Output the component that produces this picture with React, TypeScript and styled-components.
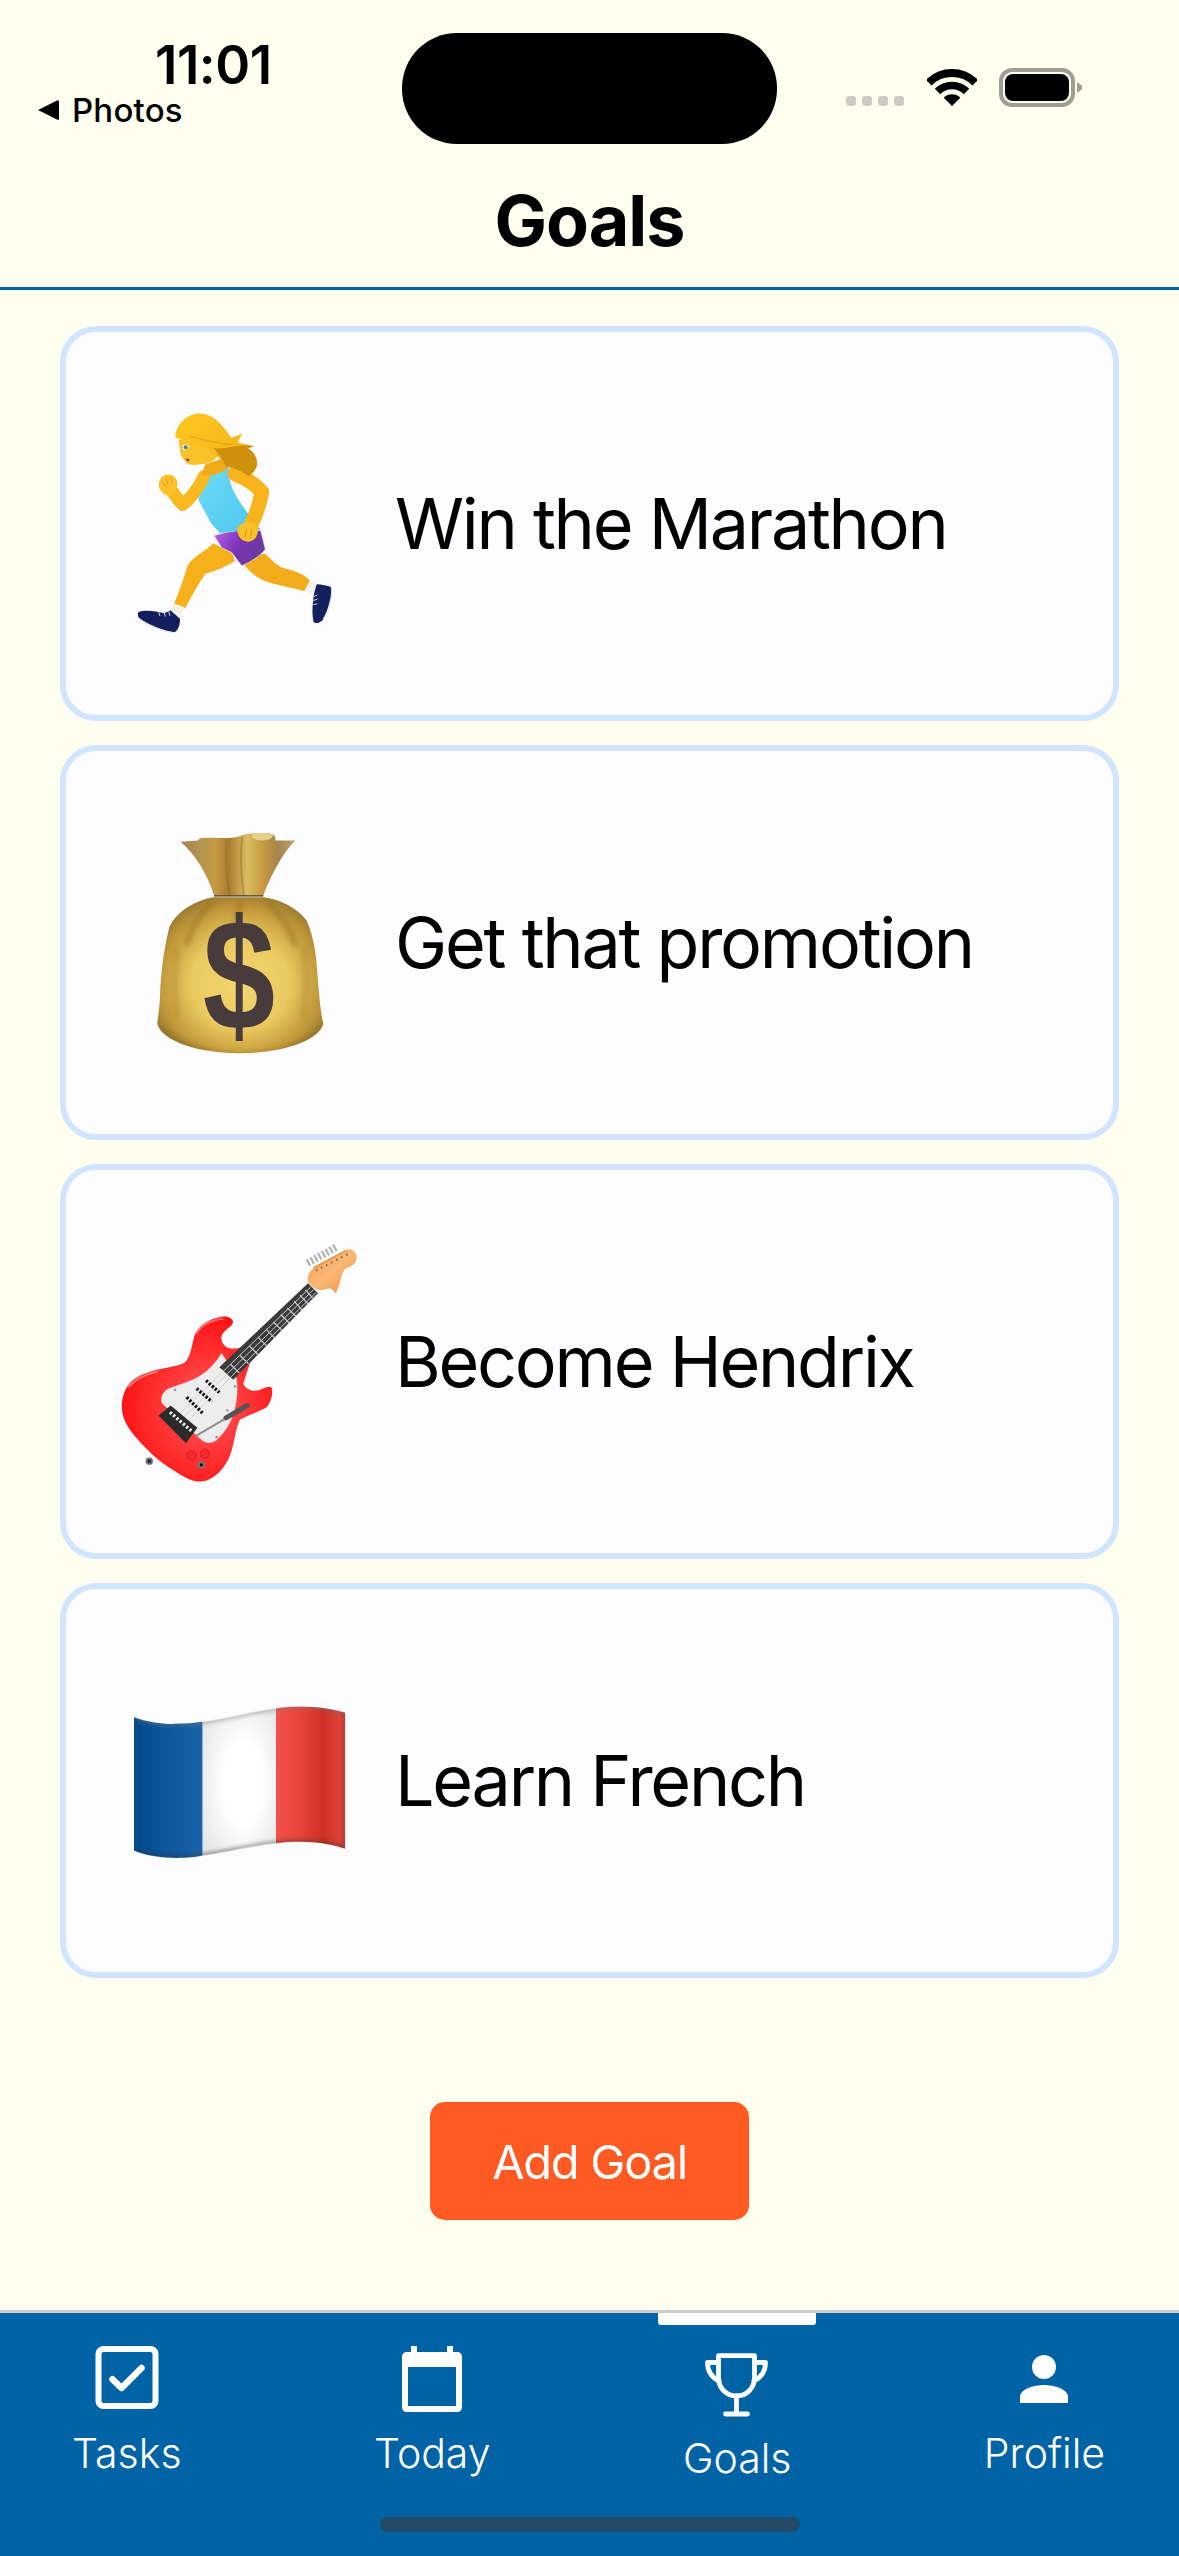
import React from "react";
import styled, { createGlobalStyle } from "styled-components";

const Global = createGlobalStyle`
  html, body { margin: 0; padding: 0; background: #fffff0; }
  * { box-sizing: border-box; }
  body { font-family: Inter, "Liberation Sans", sans-serif; }
`;

const Page = styled.div`
  width: 1179px;
  height: 2556px;
  display: flex;
  flex-direction: column;
  background: #fffff0;
  overflow: hidden;
  color: #000;
`;

const Header = styled.header`
  border-bottom: 3px solid #0063a6;
  height: 290px;
  display: flex;
  flex-direction: column;
`;

const StatusBar = styled.div`
  display: flex;
  height: 144px;
  padding-top: 33px;
`;

const StatusLeft = styled.div`
  width: 402px;
  padding: 7px 0 0 38px;
  display: flex;
  flex-direction: column;
`;

const Clock = styled.div`
  margin-left: 117px;
  font-size: 53px;
  line-height: 50px;
  font-weight: 600;
  letter-spacing: -0.5px;
`;

const BackLink = styled.div`
  margin-top: 3px;
  display: flex;
  align-items: center;
  gap: 13px;
  font-size: 33px;
  line-height: 34px;
  font-weight: 500;
  letter-spacing: 0.2px;
`;

const BackArrow = styled.span`
  width: 21px;
  height: 21px;
  background: #000;
  border-radius: 2px;
  clip-path: polygon(100% 0, 100% 100%, 0 50%);
`;

const Island = styled.div`
  width: 375px;
  height: 111px;
  border-radius: 55px;
  background: #000;
`;

const StatusRight = styled.div`
  margin: 35px 0 0 69px;
  height: 39px;
  display: flex;
  align-items: flex-end;
  gap: 23px;
`;

const Signal = styled.div`
  display: flex;
  gap: 6px;
  margin-bottom: 1px;
`;

const SignalDot = styled.span`
  width: 10px;
  height: 10px;
  border-radius: 3.5px;
  background: #ccccc4;
`;

const WifiIcon = styled.svg`
  display: block;
  width: 50px;
  height: 37px;
  margin-bottom: 1px;
`;

const Battery = styled.div`
  width: 76px;
  height: 39px;
  margin-left: -1px;
  padding: 2px;
  border: 4px solid #9e9e93;
  border-radius: 13px;
  position: relative;
  &::after {
    content: "";
    position: absolute;
    left: 74px;
    top: 10px;
    width: 5px;
    height: 11px;
    background: #9e9e93;
    clip-path: polygon(0 0, 100% 35%, 100% 65%, 0 100%);
  }
`;

const BatteryFill = styled.div`
  height: 100%;
  border-radius: 8px;
  background: #000;
`;

const TitleBar = styled.div`
  flex: 1;
  padding-top: 10px;
  display: flex;
  align-items: center;
  justify-content: center;
`;

const Title = styled.h1`
  margin: 0;
  font-size: 70px;
  line-height: 80px;
  font-weight: 700;
  letter-spacing: -1px;
`;

const Main = styled.main`
  flex: 1;
  padding: 36px 60px 0;
  display: flex;
  flex-direction: column;
`;

const GoalList = styled.div`
  display: flex;
  flex-direction: column;
  gap: 24px;
`;

const GoalCard = styled.div`
  height: 395px;
  border: 6px solid #d2e5ff;
  border-radius: 36px;
  background: #fdfdff;
  padding-left: 50px;
  display: flex;
  align-items: center;
  gap: 29px;
`;

const EmojiArt = styled.svg`
  display: block;
  flex: none;
  width: 250px;
  height: 250px;
`;

const GoalName = styled.div`
  font-size: 70px;
  line-height: 88px;
  font-weight: 400;
  letter-spacing: -2.25px;
`;

const AddButton = styled.button`
  align-self: center;
  margin-top: 124px;
  width: 319px;
  height: 118px;
  border: 0;
  border-radius: 15px;
  background: #ff5a22;
  color: #fff;
  font-family: inherit;
  font-size: 47px;
  font-weight: 400;
  letter-spacing: -1.25px;
`;

const TabBar = styled.nav`
  position: relative;
  height: 246px;
  border-top: 3px solid #cccccc;
  background: #0063a6;
  padding: 29px 74px 0 72px;
  display: flex;
  align-items: flex-start;
  justify-content: space-between;
`;

const TabItem = styled.div<{ $active?: boolean }>`
  display: flex;
  flex-direction: column;
  align-items: center;
  padding-top: ${(p) => (p.$active ? "7px" : "0")};
  color: #fff;
`;

const TabIcon = styled.svg`
  display: block;
  width: 72px;
  height: 72px;
`;

const TabLabel = styled.span<{ $active?: boolean }>`
  margin-top: ${(p) => (p.$active ? "12px" : "14px")};
  font-size: 41px;
  line-height: 50px;
  font-weight: 300;
`;

const ActiveMark = styled.span`
  position: absolute;
  left: 658px;
  top: 0;
  width: 158px;
  height: 12px;
  background: #fff;
  border-radius: 0 0 3px 3px;
`;

const HomeBar = styled.span`
  position: absolute;
  left: 380px;
  top: 204px;
  width: 420px;
  height: 15px;
  border-radius: 8px;
  background: #234a66;
`;

const RunnerEmoji = () => (
  <EmojiArt viewBox="228 265.5 750 750" aria-hidden="true">
    <defs>
      <linearGradient id="shorts" x1="0" y1="0" x2="1" y2="0.4">
        <stop offset="0" stopColor="#b663ee" />
        <stop offset="0.55" stopColor="#7a34b4" />
        <stop offset="1" stopColor="#6a3a9a" />
      </linearGradient>
      <linearGradient id="top" x1="0" y1="0" x2="1" y2="1">
        <stop offset="0" stopColor="#6cdbfb" />
        <stop offset="1" stopColor="#4cc6ea" />
      </linearGradient>
      <linearGradient id="hair" x1="0" y1="0" x2="1" y2="1">
        <stop offset="0" stopColor="#fdc823" />
        <stop offset="0.65" stopColor="#f6b81a" />
        <stop offset="1" stopColor="#d89a10" />
      </linearGradient>
    </defs>
    <path d="M612 762C635 745 655 730 675 730C695 745 708 768 738 775C768 782 792 793 810 810L793 842C760 832 725 826 695 818C660 808 635 792 612 762Z" fill="#f3ac1a" />
    <path d="M810 810L832 824L818 852L793 842Z" fill="#f5f2ea" />
    <path d="M830 821C845 822 862 824 874 830C880 850 865 905 850 926C840 938 825 942 820 932C815 905 818 880 822 850Z" fill="#14205e" />
    <path d="M874 830C880 850 865 905 850 926" fill="none" stroke="#e6e6ee" strokeWidth="4" />
    <path d="M822 858L832 853M820 870L832 866M820 882L832 880" stroke="#cfd3e6" strokeWidth="3" />
    <path d="M520 698C500 720 468 732 444 762C432 800 418 845 402 880L436 894C452 860 478 818 496 790C525 782 558 768 585 752L575 722L548 712Z" fill="#f6b01c" />
    <path d="M400 878L434 890L420 918L388 905Z" fill="#f5f2ea" />
    <path d="M295 905C310 898 345 900 372 908L392 900L420 925C420 945 415 958 405 965C375 965 325 945 300 925C293 918 292 910 295 905Z" fill="#14205e" />
    <path d="M298 926C325 945 375 965 405 967" fill="none" stroke="#e6e6ee" strokeWidth="4" />
    <path d="M355 902L360 917M372 904L376 918M386 903L390 916" stroke="#cfd3e6" strokeWidth="3" />
    <path d="M522 675C545 668 575 662 600 660L662 660L676 716C660 738 630 755 605 766L575 726L545 712Z" fill="url(#shorts)" stroke="#f4e9fb" strokeWidth="2" />
    <path d="M490 484C505 498 530 495 545 480L568 468C562 490 570 520 585 550C600 580 625 610 662 658C620 660 575 662 540 668L514 640L476 570C474 540 482 510 490 484Z" fill="url(#top)" />
    <path d="M492 498C480 525 452 565 428 582C415 570 405 555 395 540" fill="none" stroke="#f8b81f" strokeWidth="38" strokeLinecap="round" strokeLinejoin="round" />
    <path d="M358 512C363 496 380 488 396 494C410 501 416 515 410 532C402 552 388 560 376 553C362 544 352 528 358 512Z" fill="#fbc128" />
    <path d="M378 505L385 522M392 503L398 520M368 515L378 530" stroke="#d99312" strokeWidth="2.5" />
    <path d="M584 490C622 505 648 522 666 545C658 585 645 620 630 650" fill="none" stroke="#f8b41d" strokeWidth="44" strokeLinecap="round" strokeLinejoin="round" />
    <path d="M593 650C608 630 642 630 652 650C658 670 646 692 625 694C603 694 588 672 593 650Z" fill="#fbc128" />
    <path d="M620 655L615 680M636 655L632 684" stroke="#d99312" strokeWidth="2.5" />
    <path d="M495 462L486 492C505 500 535 495 570 468L545 445Z" fill="#f2ab18" />
    <path d="M416 388C418 410 420 425 424 437L434 450C440 462 455 466 478 462C500 460 530 455 535 430C520 405 490 390 470 388Z" fill="#fbc128" />
    <path d="M428 404C434 400 442 402 447 408C442 418 434 420 429 416Z" fill="#fff" />
    <circle cx="437" cy="410" r="6" fill="#3f8190" />
    <path d="M436 444L450 446L444 454Z" fill="#8a3a12" />
    <path d="M406 372C413 335 445 308 480 309C522 310 548 345 574 382L606 370L593 396L642 407L624 413C650 430 660 460 642 482L628 497C600 478 575 470 558 468C545 440 500 410 450 400L406 380Z" fill="url(#hair)" />
    <path d="M520 412C560 420 592 396 642 407L624 413C650 430 660 460 642 482L628 497C600 478 575 470 558 468C548 448 535 428 520 412Z" fill="#cf900c" />
    <path d="M450 378C490 385 530 402 578 402" fill="none" stroke="#e39f12" strokeWidth="5" opacity="0.7" />
  </EmojiArt>
);

const MoneyEmoji = () => (
  <EmojiArt viewBox="228 232.5 750 750" aria-hidden="true">
    <defs>
      <linearGradient id="neck" x1="0" y1="0" x2="1" y2="0">
        <stop offset="0" stopColor="#a5844e" />
        <stop offset="0.18" stopColor="#b59550" />
        <stop offset="0.3" stopColor="#c79b45" />
        <stop offset="0.42" stopColor="#a87c2c" />
        <stop offset="0.58" stopColor="#dcbc62" />
        <stop offset="0.72" stopColor="#c4993f" />
        <stop offset="0.85" stopColor="#a5844e" />
        <stop offset="1" stopColor="#bda474" />
      </linearGradient>
      <radialGradient id="bag" cx="0.5" cy="0.55" r="0.58">
        <stop offset="0" stopColor="#f3d66f" />
        <stop offset="0.5" stopColor="#ebca60" />
        <stop offset="0.82" stopColor="#c29a3a" />
        <stop offset="1" stopColor="#9d7c32" />
      </radialGradient>
      <filter id="soft" x="-20%" y="-20%" width="140%" height="140%">
        <feGaussianBlur stdDeviation="8" />
      </filter>
      <clipPath id="bagClip">
        <path d="M522 470C470 478 410 510 388 560C375 610 362 690 360 770C358 810 352 840 352 850C365 900 470 938 600 938C730 938 835 900 850 850C838 800 835 720 828 650C822 600 812 570 800 540C770 500 715 475 670 470Z" />
      </clipPath>
    </defs>
    <path d="M422 304L474 300C476 292 490 291 520 292C560 294 590 292 604 285C620 276 680 276 700 282C708 288 706 296 706 300L766 300C740 325 700 385 670 465L522 465C505 410 470 345 422 304Z" fill="url(#neck)" />
    <path d="M560 300C556 360 560 420 570 465M606 290C600 350 605 420 612 465" stroke="#8a6a2e" strokeWidth="6" fill="none" opacity="0.4" />
    <path d="M640 279C660 276 690 278 700 282C700 292 690 300 660 300C640 298 630 286 640 279Z" fill="#e5d08e" />
    <path d="M522 466H670" stroke="#3f2e18" strokeWidth="4" />
    <path d="M522 470C470 478 410 510 388 560C375 610 362 690 360 770C358 810 352 840 352 850C365 900 470 938 600 938C730 938 835 900 850 850C838 800 835 720 828 650C822 600 812 570 800 540C770 500 715 475 670 470Z" fill="url(#bag)" />
    <g clipPath="url(#bagClip)">
      <g filter="url(#soft)" fill="none" strokeLinecap="round">
        <path d="M520 478C500 500 460 540 440 610" stroke="#9d7628" strokeWidth="14" opacity="0.7" />
        <path d="M600 475C598 510 590 530 585 560" stroke="#9d7628" strokeWidth="14" opacity="0.65" />
        <path d="M680 480C710 510 745 550 765 610" stroke="#9d7628" strokeWidth="14" opacity="0.7" />
        <path d="M360 860C420 925 520 950 600 950C700 950 790 925 850 860" stroke="#8f6d26" strokeWidth="22" opacity="0.7" />
        <path d="M410 620C400 690 400 760 410 830" stroke="#b48d36" strokeWidth="16" opacity="0.5" />
        <path d="M795 620C800 690 800 760 790 830" stroke="#b48d36" strokeWidth="16" opacity="0.5" />
      </g>
    </g>
    <text transform="translate(597 865) scale(1 1.21)" textAnchor="middle" fontFamily="'Liberation Sans', sans-serif" fontWeight="700" fontSize="390" fill="#483b3c">$</text>
  </EmojiArt>
);

const GuitarEmoji = () => (
  <EmojiArt viewBox="228 229.5 750 750" aria-hidden="true">
    <defs>
      <radialGradient id="guitarBody" cx="0.55" cy="0.55" r="0.75">
        <stop offset="0" stopColor="#ff5a5e" />
        <stop offset="0.5" stopColor="#ff2a2a" />
        <stop offset="0.8" stopColor="#fb0d0f" />
        <stop offset="1" stopColor="#ff4c50" />
      </radialGradient>
      <linearGradient id="headstock" x1="0" y1="0" x2="1" y2="1">
        <stop offset="0" stopColor="#f39a3c" />
        <stop offset="0.5" stopColor="#fbb878" />
        <stop offset="1" stopColor="#f09038" />
      </linearGradient>
    </defs>
    <path d="M545 469C560 466 578 472 579 485C578 496 558 505 549 518C540 530 543 550 560 560C575 568 595 563 605 560L632 600L610 670C620 690 640 695 660 688C675 682 688 674 695 682C700 695 695 720 682 738C665 752 625 762 600 778C588 800 585 835 575 870C565 905 540 945 500 960C470 970 440 955 410 935C375 915 345 892 325 870C295 840 265 810 252 775C240 740 245 705 262 678C280 650 315 638 350 628C385 620 420 615 435 605C450 590 455 560 462 530C470 500 505 475 545 469Z" fill="url(#guitarBody)" />
    <path d="M470 520C480 495 515 478 550 474" fill="none" stroke="#ff8a8e" strokeWidth="6" opacity="0.7" />
    <path d="M265 680C285 655 320 640 355 632" fill="none" stroke="#ff8e90" strokeWidth="6" opacity="0.8" />
    <path d="M545 578L588 650C594 680 592 720 580 760C570 790 555 815 530 838C515 850 495 850 478 832L366 728C362 710 368 695 385 685C420 672 460 662 490 640C515 620 532 600 545 578Z" fill="#ededed" stroke="#d8d8d8" strokeWidth="2" />
    <circle cx="405" cy="688" r="4" fill="#9a9a9a" />
    <circle cx="562" cy="750" r="4" fill="#9a9a9a" />
    <circle cx="530" cy="830" r="4" fill="#9a9a9a" />
    <circle cx="585" cy="678" r="4" fill="#9a9a9a" />
    <path d="M538 620L580 658L834 398L804 368Z" fill="#3a3a3a" />
    <g stroke="#d4d4d4" strokeWidth="3.5">
      <path d="M572 612L598 638M600 585L626 610M628 556L654 582M654 530L680 556M678 506L704 532M700 484L726 510M722 462L748 488M742 442L768 468M762 422L786 448M780 404L804 430M796 388L818 412" />
    </g>
    <g stroke="#cfcfcf" strokeWidth="3" fill="none">
      <path d="M408 770L552 630L812 380" />
      <path d="M420 782L562 640L820 388" />
      <path d="M432 794L572 650L828 396" />
    </g>
    <g stroke="#111" strokeWidth="10" strokeLinecap="butt" strokeDasharray="7 5">
      <path d="M498 660L538 696" />
      <path d="M470 684L516 724" />
      <path d="M440 710L490 760" />
    </g>
    <path d="M355 765L392 735L472 802L438 848Z" fill="#2b2b2b" />
    <path d="M390 755L455 812" stroke="#eee" strokeWidth="10" strokeDasharray="7 6" />
    <path d="M468 826L560 772" stroke="#8d8d8d" strokeWidth="6" fill="none" />
    <path d="M558 772L622 735" stroke="#555" strokeWidth="15" strokeLinecap="round" />
    <circle cx="455" cy="885" r="14" fill="#f22b30" stroke="#c81015" strokeWidth="2" />
    <circle cx="495" cy="880" r="14" fill="#f22b30" stroke="#c81015" strokeWidth="2" />
    <circle cx="484" cy="913" r="11" fill="#777" />
    <circle cx="484" cy="913" r="5" fill="#111" />
    <circle cx="328" cy="902" r="11" fill="#6e6e6e" />
    <circle cx="328" cy="902" r="5" fill="#222" />
    <path d="M802 308L892 258" stroke="#b5b5b5" strokeWidth="22" strokeDasharray="7 6" />
    <path d="M803 350C808 332 820 322 838 312L918 268C935 262 948 272 950 288C952 305 938 318 922 322C910 326 905 345 900 365L888 399C880 392 874 382 866 383C852 390 835 392 818 380C808 372 802 362 803 350Z" fill="url(#headstock)" />
    <path d="M828 330L925 280" stroke="#666" strokeWidth="7" strokeDasharray="4 13" />
    <path d="M820 322L918 270" stroke="#f0881f" strokeWidth="4" fill="none" />
  </EmojiArt>
);

const FlagEmoji = () => (
  <EmojiArt viewBox="228 226.5 750 750" aria-hidden="true">
    <defs>
      <linearGradient id="flagBlue" x1="0" y1="0" x2="1" y2="0">
        <stop offset="0" stopColor="#004a8c" />
        <stop offset="1" stopColor="#1a65a9" />
      </linearGradient>
      <radialGradient id="flagWhite" cx="0.55" cy="0.5" r="0.65">
        <stop offset="0.4" stopColor="#ffffff" />
        <stop offset="1" stopColor="#e6e6e6" />
      </radialGradient>
      <linearGradient id="flagRed" x1="0" y1="0" x2="1" y2="0">
        <stop offset="0" stopColor="#f3514a" />
        <stop offset="0.3" stopColor="#ea463e" />
        <stop offset="0.68" stopColor="#cd3025" />
        <stop offset="0.9" stopColor="#dd4238" />
        <stop offset="1" stopColor="#b83a30" />
      </linearGradient>
      <clipPath id="flagClip">
        <path d="M282 410C320 425 370 432 412 430C440 430 465 428 488 424C560 415 640 392 708 384C790 372 860 380 916 397V805C860 785 790 778 708 788C640 795 560 815 488 825C465 830 430 833 395 832C350 830 310 822 282 810Z" />
      </clipPath>
      <filter id="flagBlur" x="-10%" y="-30%" width="120%" height="160%">
        <feGaussianBlur stdDeviation="6" />
      </filter>
    </defs>
    <g clipPath="url(#flagClip)">
      <rect x="280" y="370" width="208" height="470" fill="url(#flagBlue)" />
      <rect x="488" y="370" width="220" height="470" fill="url(#flagWhite)" />
      <rect x="708" y="370" width="210" height="470" fill="url(#flagRed)" />
      <g filter="url(#flagBlur)" fill="none" strokeWidth="11">
        <path d="M282 410C320 425 370 432 412 430C440 430 465 428 488 424C560 415 640 392 708 384C790 372 860 380 916 397" stroke="#777" opacity="0.55" />
        <path d="M282 810C310 822 350 830 395 832C430 833 465 830 488 825C560 815 640 795 708 788C790 778 860 785 916 805" stroke="#333" opacity="0.6" />
      </g>
    </g>
  </EmojiArt>
);

const goals = [
  { name: "Win the Marathon", Art: RunnerEmoji },
  { name: "Get that promotion", Art: MoneyEmoji },
  { name: "Become Hendrix", Art: GuitarEmoji },
  { name: "Learn French", Art: FlagEmoji },
];

export default function App() {
  return (
    <Page>
      <Global />
      <Header>
        <StatusBar>
          <StatusLeft>
            <Clock>11:01</Clock>
            <BackLink>
              <BackArrow />
              Photos
            </BackLink>
          </StatusLeft>
          <Island />
          <StatusRight>
            <Signal>
              <SignalDot />
              <SignalDot />
              <SignalDot />
              <SignalDot />
            </Signal>
            <WifiIcon viewBox="0 0 50 37" aria-hidden="true">
              <path d="M1.7 13.7A33 33 0 0 1 48.3 13.7" fill="none" stroke="#000" strokeWidth="8" />
              <path d="M10.5 22.5A20.5 20.5 0 0 1 39.5 22.5" fill="none" stroke="#000" strokeWidth="7.7" />
              <path d="M25 37L16.7 28.7A11.7 11.7 0 0 1 33.3 28.7Z" fill="#000" />
            </WifiIcon>
            <Battery>
              <BatteryFill />
            </Battery>
          </StatusRight>
        </StatusBar>
        <TitleBar>
          <Title>Goals</Title>
        </TitleBar>
      </Header>
      <Main>
        <GoalList>
          {goals.map(({ name, Art }) => (
            <GoalCard key={name}>
              <Art />
              <GoalName>{name}</GoalName>
            </GoalCard>
          ))}
        </GoalList>
        <AddButton>Add Goal</AddButton>
      </Main>
      <TabBar>
        <TabItem>
          <TabIcon viewBox="0 0 72 72" aria-hidden="true">
            <rect x="7.5" y="7" width="57" height="57" rx="5" fill="none" stroke="#fff" strokeWidth="6" />
            <path d="M21.5 37.3L30.5 46L50.5 26" fill="none" stroke="#fff" strokeWidth="6.5" strokeLinecap="round" strokeLinejoin="round" />
          </TabIcon>
          <TabLabel>Tasks</TabLabel>
        </TabItem>
        <TabItem>
          <TabIcon viewBox="0 0 72 72" aria-hidden="true">
            <path fillRule="evenodd" fill="#fff" d="M15 4H21V10H51V4H57V10H61C64 10 66 12 66 15V65C66 68 64 70 61 70H11C8 70 6 68 6 65V15C6 12 8 10 11 10H15ZM12 25V64H60V25Z" />
          </TabIcon>
          <TabLabel>Today</TabLabel>
        </TabItem>
        <TabItem $active>
          <TabIcon viewBox="0 0 72 72" aria-hidden="true">
            <g fill="none" stroke="#fff" strokeWidth="4.8" strokeLinecap="round" strokeLinejoin="round">
              <path d="M17.5 6.7H53.5V29C53.5 39 45.5 47 35.5 47S17.5 39 17.5 29Z" />
              <path d="M17.5 13.5H6.5C6.5 22 10 28 18 32" />
              <path d="M53.5 13.5H64.5C64.5 22 61 28 53 32" />
              <path d="M35.5 47V65M24.5 65H46.5" />
            </g>
          </TabIcon>
          <TabLabel $active>Goals</TabLabel>
        </TabItem>
        <TabItem>
          <TabIcon viewBox="0 0 72 72" aria-hidden="true">
            <circle cx="36" cy="25" r="12" fill="#fff" />
            <path d="M12 61V55C12 47 26 43 36 43S60 47 60 55V61Z" fill="#fff" />
          </TabIcon>
          <TabLabel>Profile</TabLabel>
        </TabItem>
        <ActiveMark />
        <HomeBar />
      </TabBar>
    </Page>
  );
}
